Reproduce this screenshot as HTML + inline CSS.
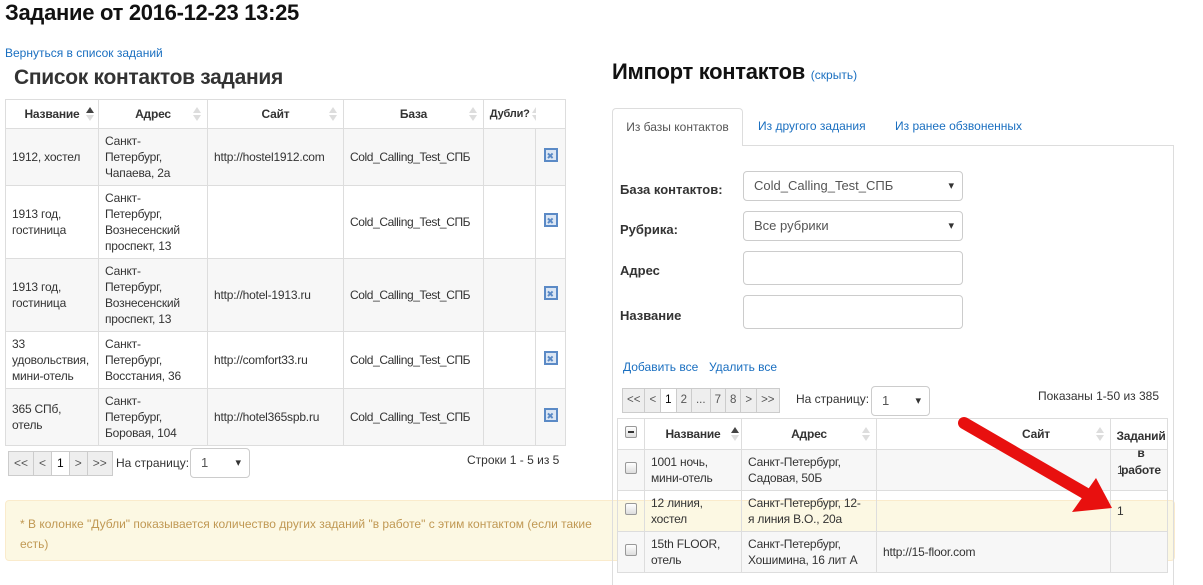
<!DOCTYPE html>
<html><head><meta charset="utf-8"><style>
*{box-sizing:border-box}
body{margin:0;width:1203px;height:572px;overflow:hidden;background:#fff;font-family:"Liberation Sans","DejaVu Sans",sans-serif;font-size:12px;color:#333;position:relative}
.a{position:absolute}
a{color:#1a6fc0;text-decoration:none}
table{border-collapse:collapse;position:absolute;table-layout:fixed}
td,th{border:1px solid #ddd;padding:0 6px;vertical-align:middle;font-size:12px;line-height:16px;color:#333;letter-spacing:-0.2px;overflow:visible}
th{font-weight:bold;text-align:center;background:#fff;position:relative}
tr.g td{background:#f7f7f7}
.srt{position:absolute;right:6px;top:50%;margin-top:-8px;width:8px;height:16px}
.srt:before{content:"";position:absolute;left:0;top:1px;border:4px solid transparent;border-bottom:6px solid #ddd;border-top:0}
.srt:after{content:"";position:absolute;left:0;top:9px;border:4px solid transparent;border-top:6px solid #ddd;border-bottom:0}
.up:before{border-bottom-color:#444}
.del{display:inline-block;width:14px;height:14px;border:2px solid #5b8ac6;background:#dbe6f4;position:relative}
.del:after{content:"✖";position:absolute;left:1px;top:-2px;font-size:9px;color:#5b8ac6}
.pg{position:absolute;display:flex;border:1px solid #ccc;background:#eee;height:25px}
.pg span{border-right:1px solid #ccc;padding:0 5px;line-height:23px;font-size:12px;color:#555}
.pg.r span{padding:0 4px;font-size:11.5px}
.pg span:last-child{border-right:0}
.inp{position:absolute;border:1px solid #ccc;border-radius:4px;background:#fff;font-size:13px;color:#555;padding-left:10px}
.sel:after{content:"▾";position:absolute;right:8px;top:0;font-size:11px;color:#333}
.cb{display:inline-block;width:12px;height:12px;border:1px solid #999;border-radius:2px;background:linear-gradient(#fff,#ddd)}
.lbl{position:absolute;left:620px;font-weight:bold;font-size:13px;color:#333}
</style></head><body>
<div class="a" style="left:5px;top:0;font-size:22px;font-weight:bold;color:#111;letter-spacing:-0.3px">Задание от 2016-12-23 13:25</div>
<a class="a" style="left:5px;top:46px" href="#">Вернуться в список заданий</a>
<div class="a" style="left:14px;top:66px;font-size:21px;font-weight:bold;color:#333;letter-spacing:-0.3px">Список контактов задания</div>

<table style="left:5px;top:99px;width:560px">
<colgroup><col style="width:93px"><col style="width:109px"><col style="width:136px"><col style="width:140px"><col style="width:52px"><col style="width:30px"></colgroup>
<tr style="height:29px"><th>Название<span class="srt up" style="right:4px"></span></th><th>Адрес<span class="srt"></span></th><th>Сайт<span class="srt"></span></th><th>База<span class="srt"></span></th><th style="border-right:0;padding:0;font-size:11px">Дубли?<span class="srt" style="right:-4px"></span></th><th style="border-left:0"></th></tr>
<tr class="g" style="height:57px"><td>1912, хостел</td><td>Санкт-<br>Петербург,<br>Чапаева, 2а</td><td>http://hostel1912.com</td><td style="letter-spacing:-0.4px">Cold_Calling_Test_СПБ</td><td></td><td style="text-align:center;padding:0"><span class="del"></span></td></tr>
<tr style="height:73px"><td>1913 год,<br>гостиница</td><td>Санкт-<br>Петербург,<br>Вознесенский<br>проспект, 13</td><td></td><td style="letter-spacing:-0.4px">Cold_Calling_Test_СПБ</td><td></td><td style="text-align:center;padding:0"><span class="del"></span></td></tr>
<tr class="g" style="height:73px"><td>1913 год,<br>гостиница</td><td>Санкт-<br>Петербург,<br>Вознесенский<br>проспект, 13</td><td>http://hotel-1913.ru</td><td style="letter-spacing:-0.4px">Cold_Calling_Test_СПБ</td><td></td><td style="text-align:center;padding:0"><span class="del"></span></td></tr>
<tr style="height:57px"><td>33<br>удовольствия,<br>мини-отель</td><td>Санкт-<br>Петербург,<br>Восстания, 36</td><td>http://comfort33.ru</td><td style="letter-spacing:-0.4px">Cold_Calling_Test_СПБ</td><td></td><td style="text-align:center;padding:0"><span class="del"></span></td></tr>
<tr class="g" style="height:57px"><td>365 СПб,<br>отель</td><td>Санкт-<br>Петербург,<br>Боровая, 104</td><td>http://hotel365spb.ru</td><td style="letter-spacing:-0.4px">Cold_Calling_Test_СПБ</td><td></td><td style="text-align:center;padding:0"><span class="del"></span></td></tr>
</table>

<div class="pg" style="left:8px;top:451px"><span>&lt;&lt;</span><span>&lt;</span><span style="background:#fff;color:#000">1</span><span>&gt;</span><span>&gt;&gt;</span></div>
<div class="a" style="left:116px;top:456px">На страницу:</div>
<div class="inp sel" style="left:190px;top:448px;width:60px;height:30px;line-height:28px">1</div>
<div class="a" style="left:467px;top:453px">Строки 1 - 5 из 5</div>

<div class="a" style="left:5px;top:500px;width:1170px;height:61px;background:#fcf8e3;border:1px solid #faebcc;border-radius:4px"></div>
<div class="a" style="left:20px;top:514px;width:580px;color:#c09853;line-height:20px">* В колонке "Дубли" показывается количество других заданий "в работе" с этим контактом (если такие есть)</div>

<div class="a" style="left:612px;top:59px;font-size:22px;font-weight:bold;color:#111;letter-spacing:-0.3px">Импорт контактов <span style="font-size:12px;font-weight:normal;color:#1a6fc0;letter-spacing:0">(скрыть)</span></div>
<div class="a" style="left:612px;top:145px;width:562px;height:440px;border:1px solid #ddd;border-bottom:0"></div>
<div class="a" style="left:612px;top:108px;width:131px;height:38px;border:1px solid #ddd;border-bottom:0;border-radius:4px 4px 0 0;background:#fff;text-align:center;line-height:36px;color:#555">Из базы контактов</div>
<a class="a" style="left:758px;top:119px" href="#">Из другого задания</a>
<a class="a" style="left:895px;top:119px" href="#">Из ранее обзвоненных</a>

<div class="lbl" style="top:182px">База контактов:</div>
<div class="lbl" style="top:222px">Рубрика:</div>
<div class="lbl" style="top:263px">Адрес</div>
<div class="lbl" style="top:308px">Название</div>
<div class="inp sel" style="left:743px;top:171px;width:220px;height:30px;line-height:28px">Cold_Calling_Test_СПБ</div>
<div class="inp sel" style="left:743px;top:211px;width:220px;height:30px;line-height:28px">Все рубрики</div>
<div class="inp" style="left:743px;top:251px;width:220px;height:34px"></div>
<div class="inp" style="left:743px;top:295px;width:220px;height:34px"></div>
<a class="a" style="left:623px;top:360px" href="#">Добавить все</a>
<a class="a" style="left:709px;top:360px" href="#">Удалить все</a>

<div class="pg r" style="left:622px;top:388px"><span>&lt;&lt;</span><span>&lt;</span><span style="background:#fff;color:#000">1</span><span>2</span><span>...</span><span>7</span><span>8</span><span>&gt;</span><span>&gt;&gt;</span></div>
<div class="a" style="left:796px;top:392px">На страницу:</div>
<div class="inp sel" style="left:871px;top:386px;width:59px;height:30px;line-height:28px">1</div>
<div class="a" style="left:1038px;top:389px">Показаны 1-50 из 385</div>

<table style="left:617px;top:418px;width:550px">
<colgroup><col style="width:27px"><col style="width:97px"><col style="width:135px"><col style="width:234px"><col style="width:57px"></colgroup>
<tr style="height:31px"><th style="padding:0"><span class="cb" style="position:relative"><span style="position:absolute;left:2px;top:4px;width:6px;height:2px;background:#333"></span></span></th><th>Название<span class="srt up" style="right:2px"></span></th><th>Адрес<span class="srt"></span></th><th style="text-align:right;padding-right:60px">Сайт<span class="srt"></span></th><th style="padding:0"><div style="position:absolute;left:4px;top:9px;width:52px;text-align:center;line-height:17px;z-index:2">Заданий<br>в<br>работе</div></th></tr>
<tr class="g" style="height:41px"><td style="padding:0;text-align:center"><span class="cb"></span></td><td>1001 ночь,<br>мини-отель</td><td>Санкт-Петербург,<br>Садовая, 50Б</td><td></td><td>1</td></tr>
<tr style="height:41px"><td style="padding:0;text-align:center;background:transparent"><span class="cb"></span></td><td style="background:transparent">12 линия,<br>хостел</td><td style="background:transparent">Санкт-Петербург, 12-<br>я линия В.О., 20а</td><td style="background:transparent"></td><td style="background:transparent">1</td></tr>
<tr class="g" style="height:41px"><td style="padding:0;text-align:center"><span class="cb"></span></td><td>15th FLOOR,<br>отель</td><td>Санкт-Петербург,<br>Хошимина, 16 лит А</td><td>http://15-floor.com</td><td></td></tr>
</table>

<svg class="a" style="left:950px;top:410px;z-index:3" width="170" height="110" viewBox="0 0 170 110">
<line x1="14" y1="13" x2="140" y2="86" stroke="#e8100f" stroke-width="12" stroke-linecap="round"/>
<polygon points="162,98 122,102 146,68" fill="#e8100f"/>
</svg>
</body></html>
